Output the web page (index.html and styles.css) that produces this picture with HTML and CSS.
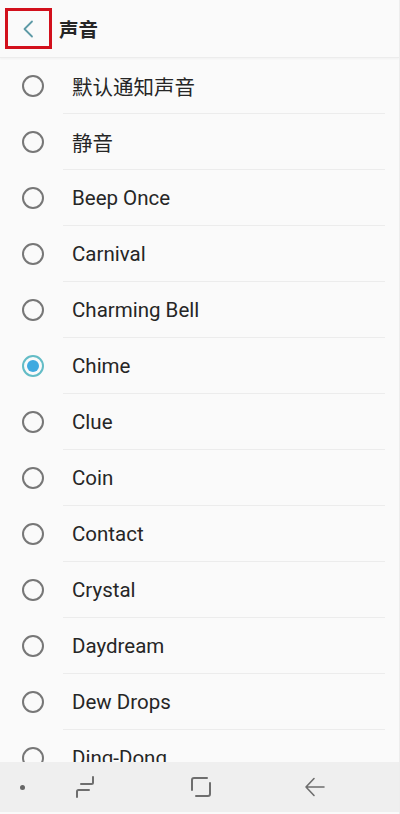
FILE: index.html
```html
<!DOCTYPE html>
<html lang="zh-CN">
<head>
  <meta charset="UTF-8" />
  <meta name="viewport" content="width=device-width, initial-scale=1.0"/>
  <title>声音</title>
  <link rel="stylesheet" href="styles.css">
</head>
<body>
  <div class="screen">
    <header class="topbar">
      <a href="#" class="back-btn">
        <svg width="12" height="18" viewBox="0 0 12 18">
          <path d="M10 1.5 L2.5 9 L10 16.5" fill="none" stroke="#5e9aa6" stroke-width="1.8" stroke-linecap="round" stroke-linejoin="round"/>
        </svg>
      </a>
      <h1>声音</h1>
    </header>

    <ul class="sound-list" id="soundList"></ul>

    <nav class="navbar">
      <span class="nav-dot"></span>
      <svg class="nav-icon" width="24" height="24" viewBox="0 0 24 24">
        <path d="M19 2 V7.5 Q19 9 17.5 9 H7" fill="none" stroke="#6e6e6e" stroke-width="2" stroke-linecap="round"/>
        <path d="M15 15 H4.5 Q3 15 3 16.5 V22" fill="none" stroke="#6e6e6e" stroke-width="2" stroke-linecap="round"/>
      </svg>
      <svg class="nav-icon" width="24" height="24" viewBox="0 0 24 24">
        <path d="M3 15 V5 Q3 3 5 3 H18" fill="none" stroke="#6e6e6e" stroke-width="2" stroke-linecap="round"/>
        <path d="M21 8 V19 Q21 21 19 21 H7" fill="none" stroke="#6e6e6e" stroke-width="2" stroke-linecap="round"/>
      </svg>
      <svg class="nav-icon" width="24" height="24" viewBox="0 0 24 24">
        <path d="M3 12 H21 M11 3.5 L3 12 L11 20.5" fill="none" stroke="#6e6e6e" stroke-width="1.6" stroke-linecap="round" stroke-linejoin="round"/>
      </svg>
    </nav>
  </div>

  <script>
    const sounds = [
      '默认通知声音', '静音', 'Beep Once', 'Carnival', 'Charming Bell',
      'Chime', 'Clue', 'Coin', 'Contact', 'Crystal', 'Daydream',
      'Dew Drops', 'Ding-Dong'
    ];
    const selected = 'Chime';
    const soundList = document.getElementById('soundList');

    sounds.forEach(name => {
      const item = document.createElement('li');
      item.className = 'sound-item';
      item.innerHTML = `
        <span class="radio ${name === selected ? 'checked' : ''}"></span>
        <span class="label">${name}</span>
      `;
      soundList.appendChild(item);
    });
  </script>
</body>
</html>
```

FILE: styles.css
```css
body {
  margin: 0;
  font-family: Roboto, "Noto Sans CJK SC", sans-serif;
  background: #fafafa;
  color: #262626;
}

.screen {
  height: 814px;
  display: flex;
  flex-direction: column;
  overflow: hidden;
  border-right: 1px solid #ededed;
  box-sizing: border-box;
}

.topbar {
  height: 57px;
  display: flex;
  align-items: center;
  border-bottom: 1px solid #ececec;
  box-shadow: 0 1px 2px rgba(0, 0, 0, 0.04);
  flex-shrink: 0;
}

.back-btn {
  width: 39px;
  height: 35px;
  margin: 0 0 0 5px;
  border: 3px solid #d2101c;
  display: flex;
  align-items: center;
  justify-content: center;
  padding-right: 2px;
}

.topbar h1 {
  margin: 0 0 0 7px;
  font-size: 19.5px;
  font-weight: 700;
  color: #262626;
  font-family: "Noto Sans CJK SC", sans-serif;
}

.sound-list {
  list-style: none;
  margin: 0;
  padding: 0;
  flex: 1;
  overflow: hidden;
}

.sound-item {
  height: 56px;
  display: flex;
  align-items: center;
  position: relative;
}

.sound-item::after {
  content: "";
  position: absolute;
  left: 63px;
  right: 14px;
  bottom: 0;
  height: 1px;
  background: #ececec;
}

.radio {
  width: 18px;
  height: 18px;
  margin-left: 22px;
  border: 2px solid #777;
  border-radius: 50%;
  display: flex;
  align-items: center;
  justify-content: center;
}

.radio.checked {
  border-color: #63bcc6;
}

.radio.checked::before {
  content: "";
  width: 12px;
  height: 12px;
  border-radius: 50%;
  background: #40aae0;
}

.label {
  margin-left: 28px;
  font-size: 20.5px;
  color: #262626;
}

.navbar {
  height: 50px;
  margin-bottom: 2px;
  background: #efefef;
  display: flex;
  align-items: center;
  flex-shrink: 0;
}

.nav-dot {
  width: 5px;
  height: 5px;
  border-radius: 50%;
  background: #666;
  margin-left: 20px;
}

.nav-icon:nth-of-type(1) {
  margin-left: 49px;
}

.nav-icon:nth-of-type(2) {
  margin-left: 91px;
}

.nav-icon:nth-of-type(3) {
  margin-left: 90px;
}
```
